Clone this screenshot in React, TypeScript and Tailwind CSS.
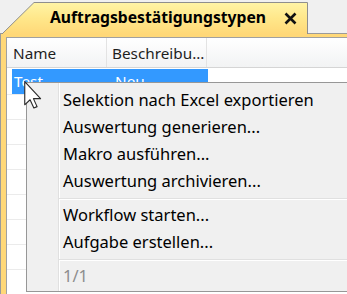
import React from 'react';

const menuItems = [
  'Selektion nach Excel exportieren',
  'Auswertung generieren...',
  'Makro ausführen...',
  'Auswertung archivieren...',
];

const menuItems2 = ['Workflow starten...', 'Aufgabe erstellen...'];

function Separator() {
  return (
    <div className="h-[7px] flex flex-col justify-center pl-[32px]">
      <div className="h-px bg-[#e0e0e0]" />
      <div className="h-px bg-white" />
    </div>
  );
}

function MenuItem({ label, disabled }: { label: string; disabled?: boolean }) {
  return (
    <div
      className={`h-[27px] flex items-center pl-[36px] text-[16.5px] whitespace-nowrap ${
        disabled ? 'text-[#8d8d8d]' : 'text-black'
      }`}
    >
      {label}
    </div>
  );
}

export default function App() {
  const rows = Array.from({ length: 8 });

  return (
    <div
      className="relative w-[347px] h-[294px] overflow-hidden bg-[#f0f0f0]"
      style={{ fontFamily: '"Noto Sans", "Open Sans", sans-serif' }}
    >
      {/* tab strip */}
      <div className="flex items-end h-[34px]">
        <div className="w-[2px] h-full border-b border-[#9a9a9a]" />
        <div className="relative w-[306px] h-[32px] flex items-center">
          <svg className="absolute inset-0" width="306" height="32" viewBox="0 0 306 32">
            <defs>
              <linearGradient id="tabg" x1="0" y1="0" x2="0" y2="1">
                <stop offset="0" stopColor="#fff4a6" />
                <stop offset="0.5" stopColor="#ffe78a" />
                <stop offset="1" stopColor="#ffd878" />
              </linearGradient>
            </defs>
            <path d="M0 32 L32 0.5 L305.5 0.5 L305.5 32 Z" fill="url(#tabg)" />
            <path d="M0 32 L32 0.5 L305.5 0.5 L305.5 32" fill="none" stroke="#8e8e8e" strokeWidth="1" />
          </svg>
          <span className="relative ml-[48px] text-[15.7px] font-bold text-black">
            Auftragsbestätigungstypen
          </span>
          <svg className="relative ml-auto mr-[11px]" width="13" height="13" viewBox="0 0 13 13">
            <path d="M1.5 1.5 L11.5 11.5 M11.5 1.5 L1.5 11.5" stroke="#111" strokeWidth="2.6" />
          </svg>
        </div>
        <div className="flex-1 h-full border-b border-[#9a9a9a]" />
      </div>

      {/* panel */}
      <div className="border-l border-[#9a9a9a] bg-[#ffd878] pl-[5px] pt-[3px] h-[260px]">
        <div className="border-l border-t border-[#a0a0a0] bg-white h-full">
          <div className="flex h-[30px] border-b border-[#d5d5d5] bg-gradient-to-b from-white to-[#f2f3f4] text-[15.3px] text-[#1e1e1e]">
            <div className="w-[100px] pl-[6px] pt-[2px] flex items-center border-r border-[#e3e3e3]">Name</div>
            <div className="w-[100px] pl-[5px] pt-[2px] flex items-center border-r border-[#e3e3e3]">Beschreibu...</div>
            <div className="flex-1" />
          </div>
          <div className="h-[27px] flex border-b border-[#ebebeb] pl-[5px] pt-[1px] text-[15.3px] text-white">
            <div className="w-[196px] flex bg-[#3399ff]">
              <div className="w-[100px] pl-[2px] flex items-center">Test</div>
              <div className="pl-[3px] flex items-center">Neu</div>
            </div>
          </div>
          {rows.map((_, i) => (
            <div key={i} className="h-[25px] border-b border-[#ebebeb]" />
          ))}
        </div>
      </div>

      {/* context menu */}
      <div className="absolute left-[26px] top-[82px] w-[340px] h-[210px] border border-[#979797] bg-[#f0f0f0]">
        <div className="absolute left-[31px] top-0 bottom-0 w-px bg-[#e0e0e0]" />
        <div className="absolute left-[32px] top-0 bottom-0 w-px bg-white" />
        <div className="relative pt-[4px]">
          {menuItems.map((m) => (
            <MenuItem key={m} label={m} />
          ))}
          <Separator />
          {menuItems2.map((m) => (
            <MenuItem key={m} label={m} />
          ))}
          <Separator />
          <MenuItem label="1/1" disabled />
        </div>
      </div>

      {/* mouse pointer */}
      <svg className="absolute left-[24px] top-[81px]" width="19" height="28" viewBox="0 0 13.5 20">
        <path
          d="M0.5 0.5 L0.5 17 L4.3 13.4 L7 19.3 L9.3 18.3 L6.7 12.6 L11.8 12.6 Z"
          fill="#fff"
          stroke="#2a2a2a"
          strokeWidth="0.8"
          strokeLinejoin="round"
        />
      </svg>
    </div>
  );
}
